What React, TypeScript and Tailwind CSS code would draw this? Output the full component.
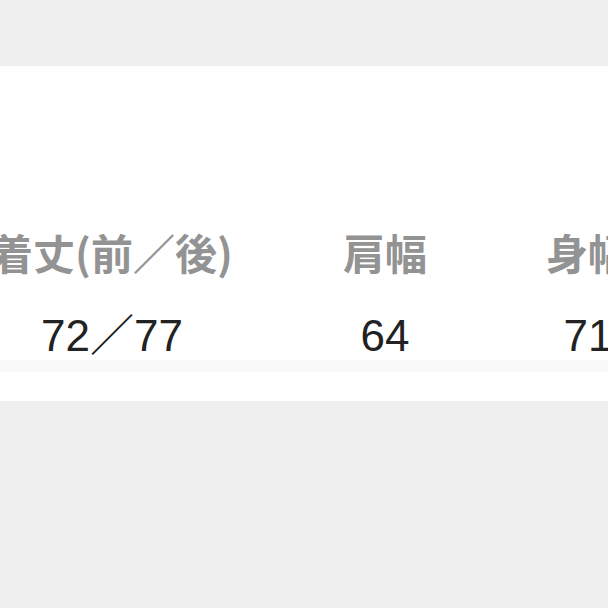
import React from 'react';

const cols = [
  { label: '着丈(前／後)', value: '72／77', width: 'w-[350px]' },
  { label: '肩幅', value: '64', width: 'w-[196px]' },
  { label: '身幅', value: '71', width: 'w-[210px]' },
];

export default function App() {
  return (
    <div className="w-[608px] h-[608px] bg-[#efefef] overflow-hidden">
      <div className="h-[66px]" />
      <div className="h-[294px] bg-white overflow-hidden pt-[162px]">
        <div className="flex -ml-[63px] w-max">
          {cols.map((c) => (
            <div key={c.label} className={`${c.width} shrink-0 flex flex-col items-center`}>
              <div
                className="text-[42px] leading-[48px] font-bold text-[#939393] whitespace-nowrap"
                style={{ fontFamily: '"Noto Sans CJK JP", sans-serif' }}
              >
                {c.label}
              </div>
              <div
                className="mt-[34px] text-[44px] leading-[52px] text-[#222] whitespace-nowrap"
                style={{ fontFamily: '"Liberation Sans", "Noto Sans CJK JP", sans-serif' }}
              >
                {c.value}
              </div>
            </div>
          ))}
        </div>
      </div>
      <div className="h-[12px] bg-[#f9f9f9]" />
      <div className="h-[29px] bg-white" />
    </div>
  );
}
